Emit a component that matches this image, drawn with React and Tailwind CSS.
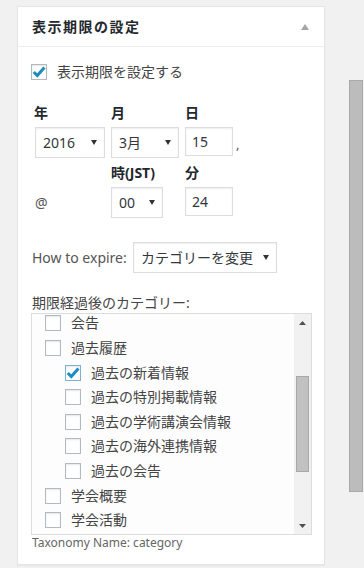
import React from "react";

const Check = () => (
  <svg width="16" height="16" viewBox="0 0 16 16" className="block overflow-visible">
    <path d="M2.8 8 L6.3 11.6 L13.4 3.6" fill="none" stroke="#1e8cbe" strokeWidth="3" strokeLinecap="butt" strokeLinejoin="miter" />
  </svg>
);

const Box = ({ checked, focus }) => (
  <div
    className={
      "w-[16px] h-[16px] shrink-0 bg-white border shadow-[inset_0_1px_2px_rgba(0,0,0,0.1)] flex items-center justify-center " +
      (focus ? "border-[#7fb1d8]" : "border-[#b4b9be]")
    }
  >
    {checked ? <Check /> : null}
  </div>
);

const Arrow = () => (
  <svg width="6" height="5" viewBox="0 0 6 5" className="block shrink-0">
    <polygon points="0,0 6,0 3,5" fill="#333" />
  </svg>
);

const Select = ({ w, children }) => (
  <div
    className={
      "h-[31px] border border-[#ddd] bg-white shadow-[inset_0_1px_2px_rgba(0,0,0,0.07)] flex items-center justify-between pl-[7px] pr-[7px] text-[14px] text-[#32373c] " +
      w
    }
  >
    <span className="whitespace-nowrap">{children}</span>
    <Arrow />
  </div>
);

const Input = ({ children }) => (
  <div className="w-[48px] h-[29px] border border-[#ddd] bg-white shadow-[inset_0_1px_2px_rgba(0,0,0,0.07)] flex items-center pl-[6px] text-[14px] text-[#32373c]">
    {children}
  </div>
);

const rows = [
  { label: "会告", level: 0 },
  { label: "過去履歴", level: 0 },
  { label: "過去の新着情報", level: 1, checked: true },
  { label: "過去の特別掲載情報", level: 1 },
  { label: "過去の学術講演会情報", level: 1 },
  { label: "過去の海外連携情報", level: 1 },
  { label: "過去の会告", level: 1 },
  { label: "学会概要", level: 0 },
  { label: "学会活動", level: 0 },
];

export default function App() {
  return (
    <div className="min-h-[568px] bg-[#f1f1f1] flex items-start pl-[17px] pt-[6px] font-['Noto_Sans','Noto_Sans_CJK_JP',sans-serif] text-[#444]">
      <div className="w-[308px] h-[559px] bg-white border border-[#e5e5e5] flex flex-col shadow-[0_1px_1px_rgba(0,0,0,0.04)]">
        <div className="h-[40px] border-b border-[#eee] flex items-center justify-between pl-[14px] pr-[15px]">
          <span className="text-[14px] font-bold text-[#23282d] tracking-[1.5px] leading-none">表示期限の設定</span>
          <svg width="8" height="6" viewBox="0 0 8 6" className="block mt-[1px]">
            <polygon points="4,0 8,6 0,6" fill="#a0a5aa" />
          </svg>
        </div>

        <div className="flex flex-col pl-[13px] pr-[12px]">
          <div className="mt-[17px] h-[16px] flex items-center">
            <Box checked />
            <span className="ml-[10px] text-[14px] leading-none">表示期限を設定する</span>
          </div>

          <div className="mt-[22px] h-[20px] flex items-center pl-[3px] text-[14px] font-bold text-[#23282d]">
            <span className="w-[77px]">年</span>
            <span className="w-[74px]">月</span>
            <span>日</span>
          </div>

          <div className="mt-[5px] flex items-start pl-[4px]">
            <div className="w-[76px]">
              <Select w="w-[70px]">2016</Select>
            </div>
            <div className="w-[74px]">
              <Select w="w-[68px]">3月</Select>
            </div>
            <Input>15</Input>
            <span className="h-[29px] flex items-center ml-[3px] pt-[6px] text-[13px] text-[#555]">,</span>
          </div>

          <div className="mt-[4px] h-[20px] flex items-center pl-[80px] text-[14px] font-bold text-[#23282d]">
            <span className="w-[74px]">時(JST)</span>
            <span>分</span>
          </div>

          <div className="mt-[5px] flex items-start pl-[4px]">
            <div className="w-[76px] h-[31px] flex items-center text-[14px] text-[#555]">@</div>
            <div className="w-[74px]">
              <Select w="w-[52px]">00</Select>
            </div>
            <Input>24</Input>
          </div>

          <div className="mt-[24px] flex items-center">
            <span className="w-[102px] pl-[1px] text-[14px] whitespace-nowrap text-[#555]">How to expire:</span>
            <Select w="w-[144px]">カテゴリーを変更</Select>
          </div>

          <div className="mt-[19px] h-[20px] flex items-center pl-[1px] text-[14px]">期限経過後のカテゴリー:</div>

          <div className="mt-[1px] w-[281px] h-[222px] border border-[#ddd] bg-[#fdfdfd] flex overflow-hidden">
            <div className="flex-1 overflow-hidden">
              <div className="mt-[-3px]">
                {rows.map((r, i) => (
                  <div
                    key={i}
                    className={"h-[24.625px] flex items-center " + (r.level ? "pl-[33px]" : "pl-[13px]")}
                  >
                    <Box checked={r.checked} focus={r.checked} />
                    <span className="ml-[10px] text-[14px] leading-none whitespace-nowrap">{r.label}</span>
                  </div>
                ))}
              </div>
            </div>
            <div className="w-[17px] bg-[#f1f1f1] flex flex-col items-center">
              <div className="h-[17px] flex items-center justify-center">
                <svg width="7" height="4" viewBox="0 0 7 4" className="block">
                  <polygon points="3.5,0 7,4 0,4" fill="#505050" />
                </svg>
              </div>
              <div className="mt-[45px] w-[13px] h-[96px] bg-[#c1c1c1] border border-[#a8a8a8]" />
              <div className="flex-1" />
              <div className="h-[17px] flex items-center justify-center">
                <svg width="7" height="4" viewBox="0 0 7 4" className="block">
                  <polygon points="0,0 7,0 3.5,4" fill="#505050" />
                </svg>
              </div>
            </div>
          </div>

          <div className="h-[16px] flex items-center pl-[1px] text-[12px] text-[#666] whitespace-nowrap">Taxonomy Name: category</div>
        </div>
      </div>

      <div className="ml-[24px] mt-[74px] w-[14px] h-[412px] bg-[#bcbcbc] border border-[#a9a9a9]" />
    </div>
  );
}
